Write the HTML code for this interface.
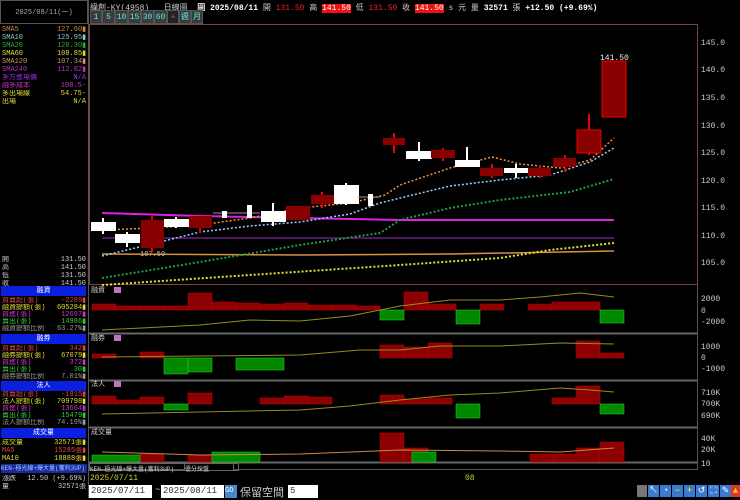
<!DOCTYPE html>
<html><head><meta charset="utf-8"><style>
*{margin:0;padding:0;box-sizing:border-box}
body{width:740px;height:498px;background:#000;font-family:"Liberation Mono","Noto Sans CJK TC",monospace;font-size:8px;color:#ddd;position:relative;overflow:hidden}
.a{position:absolute;white-space:nowrap}
.l{position:absolute;left:2px;width:84px;height:8px;line-height:8px;font-size:7px;overflow:hidden}
.l span{float:right}
.hd{position:absolute;left:1px;width:85px;height:10px;background:#0a1fe0;color:#fff;text-align:center;font-size:7px;line-height:10px}
.btn{position:absolute;top:10px;height:14px;background:#3a3a3a;color:#5ee;font-size:8px;line-height:14px;text-align:center;border:1px solid #555}
.ic{position:absolute;top:485px;width:11px;height:12px;background:#3a7ad0;color:#fff;font-size:9px;line-height:12px;text-align:center}
</style></head><body>
<div class="a" style="left:0;top:0;width:88px;height:24px;border:1px solid #555;color:#aaa;font-size:7px;line-height:24px;text-align:center">2025/08/11(一)</div>
<div class="a" style="left:88px;top:0;height:498px;border-left:1px solid #555"></div>
<div class="a" style="left:90px;top:2px;font-size:8px;color:#ccc">緯創-KY(4958) &nbsp;&nbsp;日線圖 &nbsp;<b style="color:#fff">圖 2025/08/11</b> 開 <span style="color:#e22">131.50</span> 高 <span style="background:#e11;color:#fff">141.50</span> 低 <span style="color:#e22">131.50</span> 收 <span style="background:#e11;color:#fff">141.50</span> s 元 量 <b style="color:#fff">32571</b> 張 <b style="color:#fff">+12.50 (+9.69%)</b></div>
<div class="btn" style="left:90px;width:12px">1</div><div class="btn" style="left:102px;width:13px">5</div><div class="btn" style="left:115px;width:13px">10</div><div class="btn" style="left:128px;width:13px">15</div><div class="btn" style="left:141px;width:13px">30</div><div class="btn" style="left:154px;width:13px">60</div><div class="btn" style="left:167px;width:12px;background:#222;color:#666">≡</div><div class="btn" style="left:179px;width:12px">週</div><div class="btn" style="left:191px;width:12px">月</div>
<div class="l" style="top:26px;color:#d88a3a">SMA5<span>127.60▮</span></div>
<div class="l" style="top:34px;color:#8cc">SMA10<span>125.95▮</span></div>
<div class="l" style="top:42px;color:#3a3">SMA20<span>120.30▮</span></div>
<div class="l" style="top:50px;color:#dd3">SMA60<span>108.85▮</span></div>
<div class="l" style="top:58px;color:#c96">SMA120<span>107.34▮</span></div>
<div class="l" style="top:66px;color:#b3b">SMA240<span>112.82▮</span></div>
<div class="l" style="top:74px;color:#93d">多方進場價<span>N/A</span></div>
<div class="l" style="top:82px;color:#c3c">融多成本<span>108.5-</span></div>
<div class="l" style="top:90px;color:#dd3">多出場線<span>54.75-</span></div>
<div class="l" style="top:98px;color:#dd3">出場<span>N/A</span></div>
<div class="l" style="top:256px;color:#ccc">開<span>131.50</span></div>
<div class="l" style="top:264px;color:#ccc">高<span>141.50</span></div>
<div class="l" style="top:272px;color:#ccc">低<span>131.50</span></div>
<div class="l" style="top:280px;color:#ccc">收<span>141.50</span></div>
<div class="hd" style="top:286px">融資</div>
<div class="l" style="top:297px;color:#d44">買賣超(張)<span>-2289▮</span></div>
<div class="l" style="top:304px;color:#dd3">融資餘額(張)<span>605284▮</span></div>
<div class="l" style="top:311px;color:#c3c">買進(張)<span>12697▮</span></div>
<div class="l" style="top:318px;color:#3c3">賣出(張)<span>14986▮</span></div>
<div class="l" style="top:325px;color:#999">融資餘額比例<span>63.27%▮</span></div>
<div class="hd" style="top:334px">融券</div>
<div class="l" style="top:345px;color:#d44">買賣超(張)<span>342▮</span></div>
<div class="l" style="top:352px;color:#dd3">融券餘額(張)<span>67079▮</span></div>
<div class="l" style="top:359px;color:#c3c">買進(張)<span>372▮</span></div>
<div class="l" style="top:366px;color:#3c3">賣出(張)<span>30▮</span></div>
<div class="l" style="top:373px;color:#999">融券餘額比例<span>7.01%▮</span></div>
<div class="hd" style="top:381px">法人</div>
<div class="l" style="top:391px;color:#d44">買賣超(張)<span>-1815▮</span></div>
<div class="l" style="top:398px;color:#dd3">法人餘額(張)<span>709798▮</span></div>
<div class="l" style="top:405px;color:#c3c">買進(張)<span>13664▮</span></div>
<div class="l" style="top:412px;color:#3c3">賣出(張)<span>15479▮</span></div>
<div class="l" style="top:419px;color:#999">法人餘額比例<span>74.19%▮</span></div>
<div class="hd" style="top:428px">成交量</div>
<div class="l" style="top:439px;color:#dd3">成交量<span>32571張▮</span></div>
<div class="l" style="top:447px;color:#d44">MA5<span>15285張▮</span></div>
<div class="l" style="top:455px;color:#dd3">MA10<span>18888張▮</span></div>
<div class="a" style="left:1px;top:464px;width:86px;height:9px;background:#1a2a9a;color:#9cf;font-size:6px;line-height:9px">KEN-極光線+爆大量(獲利3UP)</div>
<div class="l" style="top:475px;color:#ccc">漲跌<span>12.50 (+9.69%)</span></div>
<div class="l" style="top:483px;color:#ccc">量<span>32571張</span></div>
<svg class="a" style="left:0;top:0" width="740" height="498">
<g fill="none" stroke="#555">
<rect x="89.5" y="24.5" width="608" height="260" stroke="#744"/>
<line x1="89" y1="333.5" x2="698" y2="333.5" stroke="#666" stroke-width="2"/>
<line x1="89" y1="380.5" x2="698" y2="380.5" stroke="#666" stroke-width="2"/>
<line x1="89" y1="427.5" x2="698" y2="427.5" stroke="#666" stroke-width="2"/>
<line x1="697.5" y1="285" x2="697.5" y2="470"/>
<line x1="89" y1="462.5" x2="698" y2="462.5" stroke="#666" stroke-width="2"/>
<line x1="89" y1="469.5" x2="698" y2="469.5"/>
</g>
<g fill="#ccc" font-size="8" font-family="Liberation Mono">
<text x="701" y="45">145.0</text><text x="701" y="72">140.0</text><text x="701" y="100">135.0</text><text x="701" y="128">130.0</text><text x="701" y="155">125.0</text><text x="701" y="183">120.0</text><text x="701" y="210">115.0</text><text x="701" y="238">110.0</text><text x="701" y="265">105.0</text>
<text x="701" y="301">2000</text><text x="701" y="313">0</text><text x="701" y="324">-2000</text>
<text x="701" y="349">1000</text><text x="701" y="360">0</text><text x="701" y="371">-1000</text>
<text x="701" y="395">710K</text><text x="701" y="406">700K</text><text x="701" y="418">690K</text>
<text x="701" y="441">40K</text><text x="701" y="452">20K</text><text x="701" y="466">10</text>
<text x="600" y="60" fill="#eee">141.50</text><text x="140" y="256" fill="#ccc" font-size="7">107.50</text>
<text x="91" y="292" font-size="7">融資</text><text x="91" y="340" font-size="7">融券</text><text x="91" y="386" font-size="7">法人</text><text x="91" y="434" font-size="7">成交量</text>
</g>
<rect x="114" y="287" width="7" height="6" fill="#b7b"/><rect x="114" y="335" width="7" height="6" fill="#b7b"/><rect x="114" y="381" width="7" height="6" fill="#b7b"/>
<polyline fill="none" stroke="#e020e0" stroke-width="2" points="102,213 200,216 300,218 400,220 500,220 614,220"/>
<polyline fill="none" stroke="#a030c0" points="102,238 614,238"/>
<polyline fill="none" stroke="#d89040" stroke-width="1.5" points="102,254 300,255 450,254 614,251"/>
<polyline fill="none" stroke="#e0e030" stroke-width="2" stroke-dasharray="2,2" points="102,285 250,275 400,265 500,258 550,250 614,243"/>
<polyline fill="none" stroke="#20a040" stroke-width="2" stroke-dasharray="2,2" points="102,278 200,262 300,245 380,233 400,220 450,208 500,200 570,192 614,179"/>
<polyline fill="none" stroke="#9cd0ff" stroke-width="1.5" stroke-dasharray="2,2" points="102,256 152,244 200,232 250,226 300,222 350,214 380,203 400,198 450,186 500,180 550,175 590,162 614,148"/>
<polyline fill="none" stroke="#f09040" stroke-width="1.5" stroke-dasharray="2,2" points="102,230 152,228 200,225 250,218 300,208 350,203 385,195 400,185 450,168 492,157 520,164 560,168 590,160 614,138"/>
<g stroke-width="2">
<g stroke="#fff" fill="#fff">
<line x1="103" y1="218" x2="103" y2="234"/><rect x="92" y="223" width="23" height="7"/>
<line x1="127" y1="232" x2="127" y2="247"/><rect x="116" y="235" width="23" height="7"/>
<line x1="176" y1="217" x2="176" y2="228"/><rect x="165" y="220" width="23" height="6"/>
<line x1="213" y1="213" x2="260" y2="213" stroke="#999" stroke-width="1"/>
<rect x="223" y="212" width="3" height="5"/>
<rect x="248" y="206" width="3" height="11"/>
<line x1="273" y1="203" x2="273" y2="226"/><rect x="262" y="212" width="23" height="9"/>
<line x1="346" y1="183" x2="346" y2="205"/><rect x="335" y="186" width="23" height="17"/>
<line x1="358" y1="197" x2="380" y2="197" stroke="#999" stroke-width="1"/>
<rect x="369" y="195" width="3" height="10"/>
<line x1="419" y1="142" x2="419" y2="161"/><rect x="407" y="152" width="24" height="6"/>
<line x1="467" y1="147" x2="467" y2="167"/><rect x="456" y="161" width="23" height="5"/>
<line x1="516" y1="164" x2="516" y2="178"/><rect x="505" y="169" width="23" height="3"/>
</g>
<g stroke="#e00" fill="#800">
<line x1="152" y1="216" x2="152" y2="252"/><rect x="141" y="220" width="23" height="28" stroke-width="0"/>
<line x1="200" y1="214" x2="200" y2="233"/><rect x="189" y="216" width="23" height="12" stroke-width="0"/>
<rect x="286" y="206" width="24" height="14" stroke-width="0"/>
<line x1="322" y1="192" x2="322" y2="208"/><rect x="311" y="195" width="23" height="9" stroke-width="0"/>
<line x1="394" y1="133" x2="394" y2="153"/><rect x="383" y="138" width="22" height="7" stroke-width="0"/>
<line x1="443" y1="148" x2="443" y2="161"/><rect x="431" y="150" width="24" height="8" stroke-width="0"/>
<line x1="492" y1="164" x2="492" y2="178"/><rect x="480" y="168" width="23" height="8" stroke-width="0"/>
<line x1="540" y1="165" x2="540" y2="178"/><rect x="528" y="168" width="23" height="8" stroke-width="0"/>
<line x1="565" y1="155" x2="565" y2="172"/><rect x="553" y="158" width="23" height="9" stroke-width="0"/>
<line x1="589" y1="114" x2="589" y2="155"/><rect x="577" y="130" width="24" height="23" stroke-width="1"/>
<rect x="602" y="61" width="24" height="56" stroke-width="1"/>
</g></g>
<g fill="#8b0000" stroke="#c00" stroke-width=".5">
<rect x="92" y="304" width="24" height="6"/><rect x="116" y="306" width="24" height="4"/><rect x="140" y="306" width="24" height="4"/><rect x="164" y="306" width="24" height="4"/><rect x="188" y="293" width="24" height="17"/><rect x="212" y="302" width="24" height="8"/><rect x="236" y="303" width="24" height="7"/><rect x="260" y="304" width="24" height="6"/><rect x="284" y="303" width="24" height="7"/><rect x="308" y="305" width="24" height="5"/><rect x="332" y="305" width="24" height="5"/><rect x="356" y="306" width="24" height="4"/><rect x="404" y="292" width="24" height="18"/><rect x="428" y="304" width="28" height="6"/><rect x="480" y="304" width="24" height="6"/><rect x="528" y="304" width="24" height="6"/><rect x="552" y="302" width="48" height="8"/>
<rect x="92" y="354" width="24" height="4"/><rect x="140" y="352" width="24" height="6"/><rect x="380" y="345" width="24" height="13"/><rect x="404" y="347" width="24" height="11"/><rect x="428" y="343" width="24" height="15"/><rect x="576" y="341" width="24" height="17"/><rect x="600" y="353" width="24" height="5"/>
<rect x="92" y="396" width="24" height="8"/><rect x="116" y="400" width="24" height="4"/><rect x="140" y="397" width="24" height="7"/><rect x="188" y="393" width="24" height="11"/><rect x="260" y="398" width="24" height="6"/><rect x="284" y="396" width="24" height="8"/><rect x="308" y="397" width="24" height="7"/><rect x="380" y="395" width="24" height="9"/><rect x="404" y="399" width="28" height="5"/><rect x="428" y="398" width="24" height="6"/><rect x="552" y="398" width="24" height="6"/><rect x="576" y="386" width="24" height="18"/>
<rect x="140" y="454" width="24" height="8"/><rect x="188" y="455" width="24" height="7"/><rect x="380" y="433" width="24" height="29"/><rect x="404" y="448" width="24" height="14"/><rect x="530" y="454" width="24" height="8"/><rect x="554" y="454" width="24" height="8"/><rect x="576" y="448" width="24" height="14"/><rect x="600" y="442" width="24" height="20"/>
</g>
<g fill="#080" stroke="#2d2" stroke-width=".5">
<rect x="380" y="310" width="24" height="10"/><rect x="456" y="310" width="24" height="14"/><rect x="600" y="310" width="24" height="13"/>
<rect x="164" y="358" width="24" height="16"/><rect x="188" y="358" width="24" height="14"/><rect x="236" y="358" width="48" height="12"/>
<rect x="164" y="404" width="24" height="6"/><rect x="456" y="404" width="24" height="14"/><rect x="600" y="404" width="24" height="10"/>
<rect x="92" y="455" width="48" height="7"/><rect x="212" y="452" width="48" height="10"/><rect x="412" y="452" width="24" height="10"/>
</g>
<g fill="none" stroke="#9a8a20">
<polyline points="102,330 200,325 250,320 300,321 350,316 400,306 450,300 500,300 540,297 580,293 614,297"/>
<polyline points="102,357 200,356 300,355 360,350 400,350 440,346 500,346 560,343 614,344"/>
<polyline points="102,414 200,412 300,410 350,406 400,400 450,395 500,393 560,388 590,390 614,392"/>
<polyline stroke="#c84" points="102,452 200,455 300,454 400,450 500,451 560,452 614,448"/>
</g>
</svg>
<div class="a" style="left:89px;top:463px;width:150px;height:8px;font-size:6px;color:#ccc;border:1px solid #666">KEN-極光線+爆大量(獲利3UP)</div>
<div class="a" style="left:184px;top:463px;width:50px;height:8px;font-size:6px;color:#ccc;border:1px solid #666;background:#000">優分採盤</div>
<div class="a" style="left:90px;top:474px;font-size:8px;color:#cc3">2025/07/11</div>
<div class="a" style="left:465px;top:474px;font-size:8px;color:#cc3">08</div>
<div class="a" style="left:89px;top:485px;width:63px;height:13px;background:#fff;color:#333;font-size:9px;line-height:13px;padding-left:2px">2025/07/11</div>
<div class="a" style="left:155px;top:485px;color:#ccc;font-size:9px">~</div>
<div class="a" style="left:161px;top:485px;width:63px;height:13px;background:#fff;color:#333;font-size:9px;line-height:13px;padding-left:2px">2025/08/11</div>
<div class="a" style="left:225px;top:485px;width:12px;height:13px;background:#48c;color:#fff;font-size:7px;line-height:13px">GO</div>
<div class="a" style="left:240px;top:484px;color:#ccc;font-size:11px;font-family:'Noto Sans CJK TC',sans-serif">保留空間</div>
<div class="a" style="left:288px;top:485px;width:30px;height:13px;background:#fff;color:#333;font-size:9px;line-height:13px;padding-left:2px">5</div>
<div class="a" style="left:637px;top:485px;width:10px;height:12px;background:#777"></div>
<div class="ic" style="left:648px">↖</div><div class="ic" style="left:660px">◔</div><div class="ic" style="left:672px;color:#ff0">−</div><div class="ic" style="left:684px;color:#ff0">+</div><div class="ic" style="left:696px">↺</div><div class="ic" style="left:708px">⛶</div><div class="ic" style="left:720px">✎</div><div class="ic" style="left:731px;width:9px;background:#d33;color:#fc0">▲</div>
</body></html>
